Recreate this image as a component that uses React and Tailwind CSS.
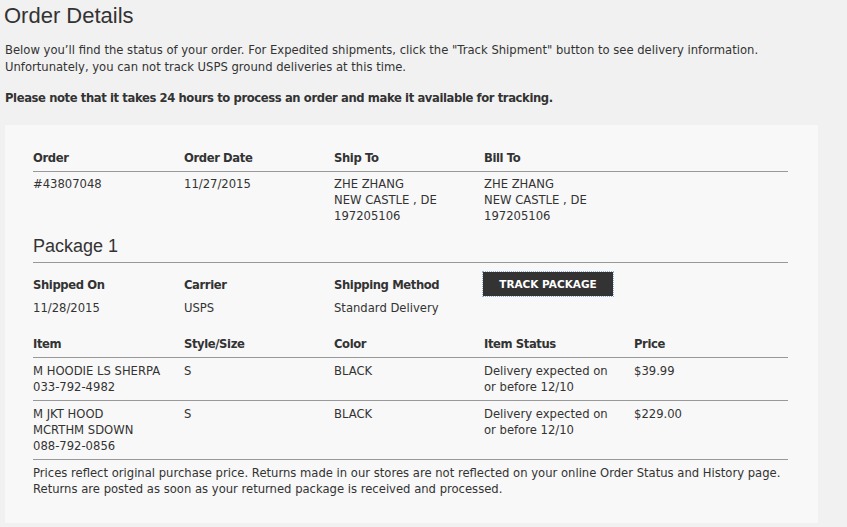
import React from "react";

const body = { fontFamily: '"DejaVu Sans", Verdana, sans-serif' };

function Th({ children }) {
  return <div className="font-bold tracking-[-0.4px]">{children}</div>;
}

export default function App() {
  return (
    <div className="min-h-[527px] w-[847px] bg-[#f1f1f1] text-[#333] px-[5px] pt-[3px] text-[11.6px] leading-[16px]" style={body}>
      <h1 className="text-[22px] leading-[26px] font-['Liberation_Sans',Arial,sans-serif] text-[#333] -ml-[1px]">Order Details</h1>
      <p className="mt-[13px] leading-[17px]">
        Below you’ll find the status of your order. For Expedited shipments, click the "Track Shipment" button to see delivery information.
        <br />
        Unfortunately, you can not track USPS ground deliveries at this time.
      </p>
      <p className="mt-[14px] font-bold tracking-[-0.4px] leading-[17px]">Please note that it takes 24 hours to process an order and make it available for tracking.</p>

      <div className="mt-[18px] w-[813px] bg-[#f8f8f8] pl-[28px] pr-[30px] pt-[24px] pb-[26px]">
        <div className="w-[755px]">
          <div className="grid grid-cols-[151px_150px_150px_150px_1fr] border-b border-[#999] pt-[1px] pb-[5px]">
            <Th>Order</Th>
            <Th>Order Date</Th>
            <Th>Ship To</Th>
            <Th>Bill To</Th>
            <div />
          </div>
          <div className="grid grid-cols-[151px_150px_150px_150px_1fr] pt-[4px]">
            <div>#43807048</div>
            <div>11/27/2015</div>
            <div>ZHE ZHANG<br />NEW CASTLE , DE<br />197205106</div>
            <div>ZHE ZHANG<br />NEW CASTLE , DE<br />197205106</div>
            <div />
          </div>

          <h2 className="mt-[11px] text-[18px] leading-[22px] font-['Liberation_Sans',Arial,sans-serif] border-b border-[#999] pb-[5px]">Package 1</h2>

          <div className="grid grid-cols-[151px_150px_150px_150px_1fr] mt-[9px]">
            <div className="pt-[5px]"><Th>Shipped On</Th><div className="mt-[7px]">11/28/2015</div></div>
            <div className="pt-[5px]"><Th>Carrier</Th><div className="mt-[7px]">USPS</div></div>
            <div className="pt-[5px]"><Th>Shipping Method</Th><div className="mt-[7px]">Standard Delivery</div></div>
            <div>
              <button className="h-[24px] w-[130px] -ml-[1px] bg-[#333] text-white text-[10.5px] font-bold tracking-[0px] outline outline-1 outline-dotted outline-[#8fb3d9]" style={body}>
                TRACK PACKAGE
              </button>
            </div>
            <div />
          </div>

          <div className="grid grid-cols-[151px_150px_150px_150px_1fr] mt-[20px] border-b border-[#999] pt-[0px] pb-[5px]">
            <Th>Item</Th>
            <Th>Style/Size</Th>
            <Th>Color</Th>
            <Th>Item Status</Th>
            <Th>Price</Th>
          </div>
          <div className="grid grid-cols-[151px_150px_150px_150px_1fr] border-b border-[#999] pt-[5px] pb-[5px]">
            <div>M HOODIE LS SHERPA<br />033-792-4982</div>
            <div>S</div>
            <div>BLACK</div>
            <div>Delivery expected on<br />or before 12/10</div>
            <div>$39.99</div>
          </div>
          <div className="grid grid-cols-[151px_150px_150px_150px_1fr] border-b border-[#999] pt-[5px] pb-[5px]">
            <div>M JKT HOOD<br />MCRTHM SDOWN<br />088-792-0856</div>
            <div>S</div>
            <div>BLACK</div>
            <div>Delivery expected on<br />or before 12/10</div>
            <div>$229.00</div>
          </div>
          <p className="pt-[5px] whitespace-nowrap">
            Prices reflect original purchase price. Returns made in our stores are not reflected on your online Order Status and History page.
            <br />
            Returns are posted as soon as your returned package is received and processed.
          </p>
        </div>
      </div>
    </div>
  );
}
